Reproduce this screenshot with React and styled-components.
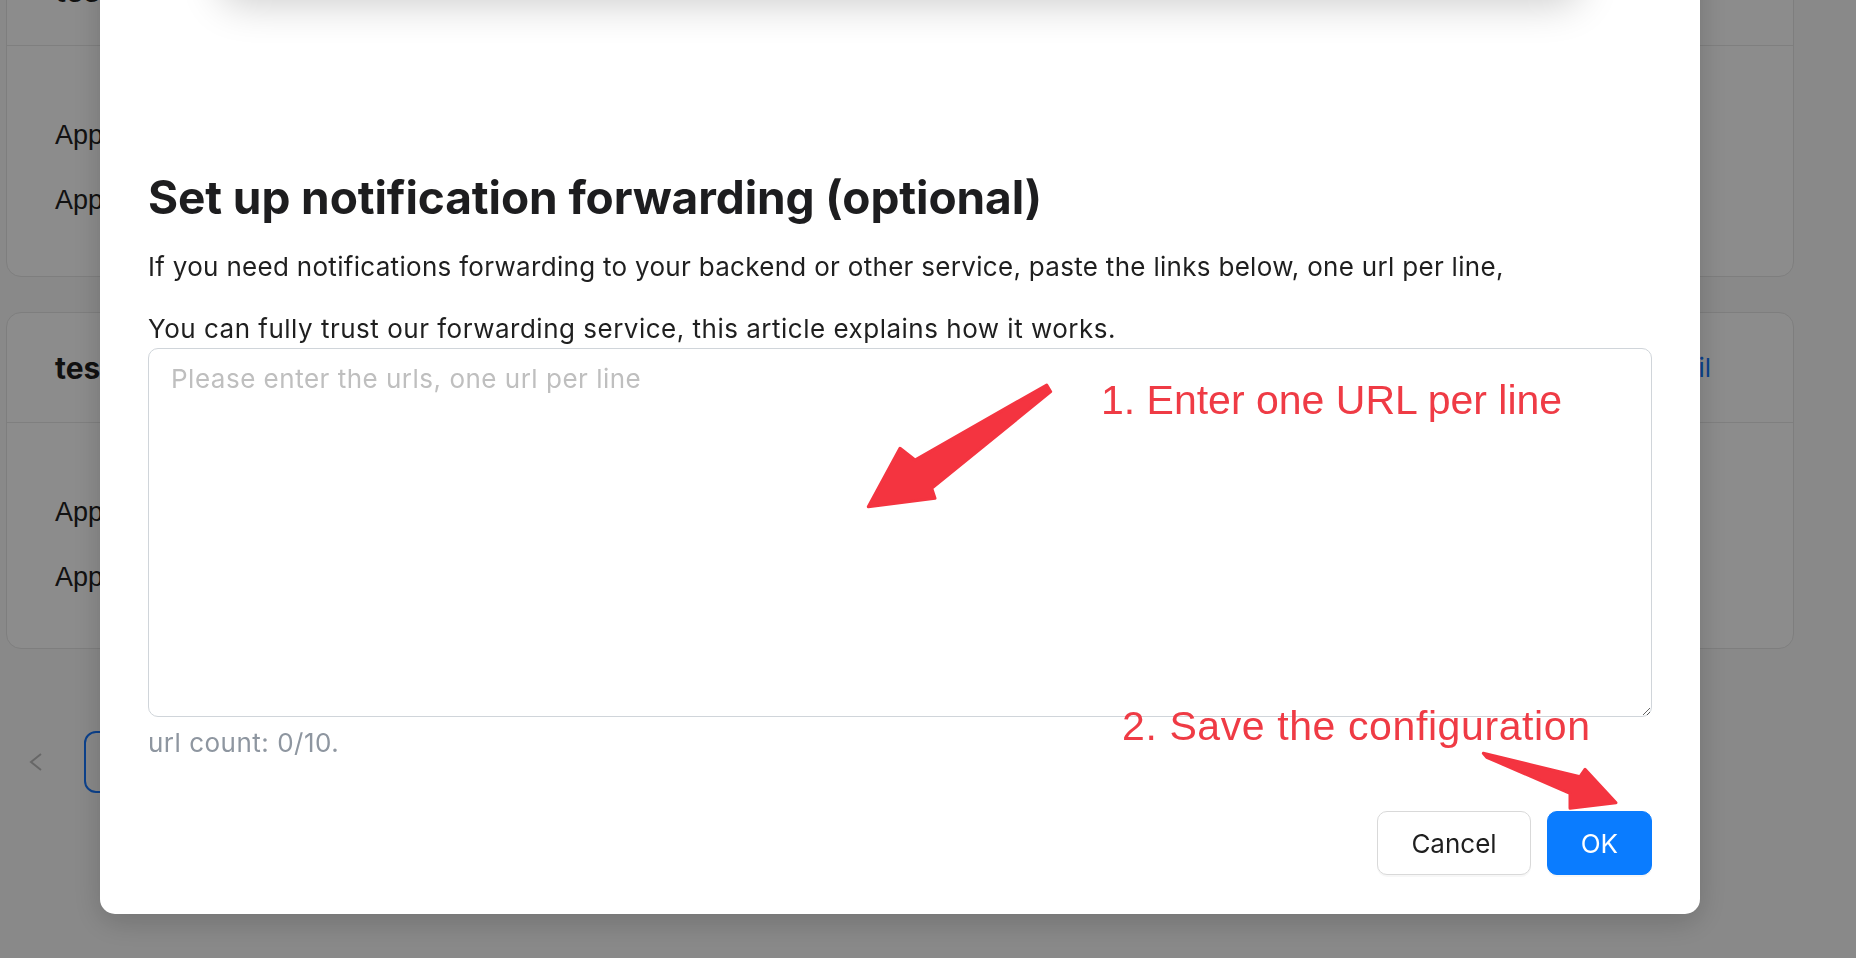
import styled, { createGlobalStyle } from 'styled-components';

const GlobalStyle = createGlobalStyle`
	html, body {
		margin: 0;
		padding: 0;
		background: #fafafa;
		font-family: Inter, 'Noto Sans', sans-serif;
		overflow: hidden;
	}
	* {
		box-sizing: border-box;
	}
`;

/* ---------- page behind the dialog ---------- */

const Page = styled.div`
	display: flex;
	flex-direction: column;
	gap: 35px;
	margin-top: -65px;
	padding: 0 62px 0 6px;
`;

const Card = styled.div`
	background: #fff;
	border: 1px solid #e6e6e6;
	border-radius: 15px;
`;

const CardHeader = styled.div`
	display: flex;
	align-items: center;
	justify-content: space-between;
	height: 110px;
	padding: 0 82px 0 48px;
	border-bottom: 1px solid #e8e8e8;
`;

const CardTitle = styled.span`
	font-size: 30px;
	font-weight: 700;
	color: #1f1f1f;
`;

const CardLink = styled.a`
	font-size: 26px;
	color: #1677ff;
	text-decoration: none;
`;

const CardBody = styled.div`
	display: flex;
	flex-direction: column;
	gap: 25px;
	padding: ${(p) => (p.$tall ? '69px 48px 56px' : '69px 48px 51px')};
`;

const InfoRow = styled.div`
	font-family: 'Liberation Sans', Arial, sans-serif;
	font-size: 27px;
	line-height: 40px;
	color: #222;
`;

const Pager = styled.div`
	display: flex;
	align-items: center;
	gap: 40px;
	margin-top: 47px;
	padding-left: 22px;
`;

const PageButton = styled.div`
	display: flex;
	align-items: center;
	justify-content: center;
	width: 62px;
	height: 62px;
	border: 2px solid #1677ff;
	border-radius: 12px;
	font-size: 26px;
	color: #1677ff;
`;

/* ---------- dialog ---------- */

const Overlay = styled.div`
	position: fixed;
	inset: 0;
	background: rgba(0, 0, 0, 0.45);
	overflow: hidden;
`;

const Modal = styled.div`
	position: relative;
	width: 1600px;
	margin: -200px 0 0 100px;
	padding: 0 48px 39px;
	background: #fff;
	border-radius: 15px;
	box-shadow: 0 8px 30px rgba(0, 0, 0, 0.18);
`;

const Preview = styled.div`
	width: 1360px;
	height: 190px;
	margin: 0 auto;
	background: #fff;
	border-radius: 20px;
	box-shadow: 0 14px 40px rgba(0, 0, 0, 0.2);
`;

const Title = styled.h2`
	margin: 180px 0 24px;
	font-size: 46px;
	line-height: 1.2;
	font-weight: 700;
	color: #1d1d1f;
	letter-spacing: -0.1px;
`;

const Text = styled.p`
	margin: 0 0 ${(p) => p.$gap}px;
	font-size: 26px;
	line-height: 36px;
	letter-spacing: ${(p) => p.$spacing}px;
	color: #1f1f1f;
`;

const UrlInput = styled.textarea`
	display: block;
	width: 100%;
	height: 369px;
	padding: 12px 22px;
	border: 1.5px solid #d0d5da;
	border-radius: 10px;
	font-family: Inter, sans-serif;
	font-size: 26px;
	line-height: 36px;
	letter-spacing: 0.5px;
	color: #1f1f1f;
	outline: none;

	&::placeholder {
		color: #bfbfbf;
	}
`;

const Count = styled.div`
	margin-top: 8px;
	font-size: 26px;
	line-height: 36px;
	letter-spacing: 0.5px;
	color: #8e96a0;
`;

const Footer = styled.div`
	display: flex;
	justify-content: flex-end;
	gap: 16px;
	margin-top: 50px;
`;

const Button = styled.button`
	height: 64px;
	padding: 0 33px;
	border-radius: 10px;
	font-family: Inter, sans-serif;
	font-size: 26px;
	cursor: pointer;
	border: 1.5px solid ${(p) => (p.$primary ? '#0a7cff' : '#d9d9d9')};
	background: ${(p) => (p.$primary ? '#0a7cff' : '#fff')};
	color: ${(p) => (p.$primary ? '#fff' : '#1f1f1f')};
	box-shadow: 0 2px 0 rgba(0, 0, 0, 0.03);
`;

/* ---------- red annotations on top ---------- */

const Annotations = styled.div`
	position: absolute;
	inset: 0;
	pointer-events: none;
`;

const Note = styled.div`
	position: absolute;
	left: ${(p) => p.$x}px;
	top: ${(p) => p.$y}px;
	font-family: 'Liberation Sans', Arial, sans-serif;
	font-size: 41px;
	line-height: 1;
	letter-spacing: ${(p) => p.$spacing || 0}px;
	color: #ef3b45;
	white-space: nowrap;
`;

const ArrowLayer = styled.svg`
	position: absolute;
	left: 0;
	top: 0;
`;

const Arrows = () => (
	<ArrowLayer width="1856" height="958" viewBox="0 0 1856 958">
		<g fill="#f43440" stroke="#f43440" strokeWidth="3" strokeLinejoin="round">
			<polygon points="868.3,506.7 900,448.3 915,460 1046.7,385 1050.7,391.7 931.7,488.3 935,498.3" />
			<polygon points="1616,802.7 1585,769.3 1580,776.7 1483.3,753.3 1486.7,757.3 1570,793.3 1570,808.3" />
		</g>
	</ArrowLayer>
);

const Chevron = () => (
	<svg width="16" height="20" viewBox="0 0 16 20">
		<polyline points="13,2 3,10 13,18" fill="none" stroke="#bcbcbc" strokeWidth="2" />
	</svg>
);

const AppCard = ({ tall }) => (
	<Card>
		<CardHeader>
			<CardTitle>test-app</CardTitle>
			<CardLink href="#">Detail</CardLink>
		</CardHeader>
		<CardBody $tall={tall}>
			<InfoRow>App ID: 2f8c7e1a-test</InfoRow>
			<InfoRow>App Key: ••••••••••••</InfoRow>
		</CardBody>
	</Card>
);

const App = () => {
	return (
		<>
			<GlobalStyle />
			<Page>
				<AppCard tall />
				<AppCard />
				<Pager>
					<Chevron />
					<PageButton>1</PageButton>
				</Pager>
			</Page>

			<Overlay>
				<Modal>
					<Preview />
					<Title>Set up notification forwarding (optional)</Title>
					<Text $gap={26} $spacing={0.3}>
						If you need notifications forwarding to your backend or other service, paste the links below, one url per line,
					</Text>
					<Text $gap={1} $spacing={0.5}>
						You can fully trust our forwarding service, this article explains how it works.
					</Text>
					<UrlInput placeholder="Please enter the urls, one url per line" />
					<Count>url count: 0/10.</Count>
					<Footer>
						<Button>Cancel</Button>
						<Button $primary>OK</Button>
					</Footer>
				</Modal>

				<Annotations>
					<Arrows />
					<Note $x={1101} $y={380}>1. Enter one URL per line</Note>
					<Note $x={1122} $y={706} $spacing={0.6}>2. Save the configuration</Note>
				</Annotations>
			</Overlay>
		</>
	);
};

export default App;
